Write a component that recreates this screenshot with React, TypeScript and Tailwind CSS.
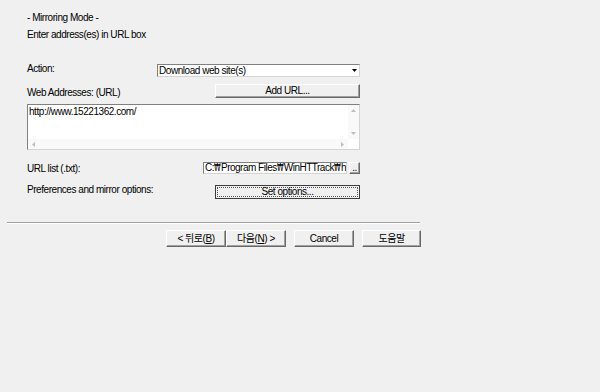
import React from "react";

const F = { fontFamily: '"Liberation Sans", "Noto Sans CJK KR", sans-serif' };

function Btn({ children, className = "" }: { children: React.ReactNode; className?: string }) {
  return (
    <div
      className={
        "flex items-center justify-center border border-t-white border-l-white border-r-[#696969] border-b-[#696969] bg-[#f0f0f0] shadow-[inset_-1px_-1px_0_#a0a0a0] " +
        className
      }
    >
      {children}
    </div>
  );
}

function W() {
  return (
    <span className="inline-block w-[7px] text-[10px] overflow-visible" style={{ fontFamily: '"DejaVu Sans Condensed", "DejaVu Sans", sans-serif' }}>
      <span className="inline-block origin-left scale-x-75">₩</span>
    </span>
  );
}

export default function App() {
  return (
    <div
      className="w-[600px] h-[392px] bg-[#f0f0f0] text-[10px] leading-[12px] tracking-[-0.45px] text-black overflow-hidden"
      style={F}
    >
      <div className="pl-[27px] w-[360px] pt-[12px] flex flex-col">
        <div>- Mirroring Mode -</div>
        <div className="mt-[5px]">Enter address(es) in URL box</div>

        <div className="mt-[23px] flex items-start justify-between">
          <span className="mt-[-1px]">Action:</span>
          <div className="w-[203px] h-[13px] bg-white border border-t-[#808080] border-l-[#808080] border-r-[#d4d4d4] border-b-[#d4d4d4] flex items-center">
            <span className="flex-1 pl-[1px] leading-[11px]">Download web site(s)</span>
            <div className="w-[10px] h-[11px] flex items-center justify-center">
              <svg width="5" height="3" viewBox="0 0 5 3">
                <path d="M0 0H5L2.5 3Z" fill="#000" />
              </svg>
            </div>
          </div>
        </div>

        <div className="mt-[7px] flex items-end justify-between">
          <span className="mb-[-1px]">Web Addresses: (URL)</span>
          <Btn className="w-[145px] h-[14px]">Add URL...</Btn>
        </div>

        <div className="mt-[6px] h-[46px] bg-white border border-t-[#808080] border-l-[#808080] border-r-[#d4d4d4] border-b-[#d4d4d4] flex flex-col">
          <div className="flex-1 flex">
            <div className="flex-1 pl-[1px] pt-[1px] leading-[11px]">http://www.15221362.com/</div>
            <div className="w-[11px] flex flex-col items-center justify-between py-[4px] bg-[#f9f9f9]">
              <svg width="5" height="3" viewBox="0 0 5 3"><path d="M0 3H5L2.5 0Z" fill="#bdbdbd" /></svg>
              <svg width="5" height="3" viewBox="0 0 5 3"><path d="M0 0H5L2.5 3Z" fill="#bdbdbd" /></svg>
            </div>
          </div>
          <div className="h-[10px] flex items-center justify-between px-[4px] bg-[#f9f9f9] mr-[11px]">
            <svg width="3" height="5" viewBox="0 0 3 5"><path d="M3 0V5L0 2.5Z" fill="#bdbdbd" /></svg>
            <svg width="3" height="5" viewBox="0 0 3 5"><path d="M0 0V5L3 2.5Z" fill="#bdbdbd" /></svg>
          </div>
        </div>

        <div className="mt-[11px] flex items-center justify-between">
          <span className="mt-[2px]">URL list (.txt):</span>
          <div className="flex items-center gap-[2px]">
            <div className="w-[144px] h-[12px] bg-white border border-t-[#808080] border-l-[#808080] border-r-[#d4d4d4] border-b-[#d4d4d4] overflow-hidden whitespace-nowrap leading-[10px] pl-[1px] tracking-[-0.5px]">
              C:<W />Program Files<W />WinHTTrack<W />hi
            </div>
            <Btn className="w-[11px] h-[12px] leading-[8px]">..</Btn>
          </div>
        </div>

        <div className="mt-[10px] flex items-start justify-between">
          <span className="mt-[-1px]">Preferences and mirror options:</span>
          <div className="w-[145px] h-[14px] border border-[#3c3c3c] bg-[#f0f0f0] p-[1px]">
            <div className="h-full border border-dotted border-[#555] flex items-center justify-center leading-[10px]">
              Set options...
            </div>
          </div>
        </div>
      </div>

      <div className="ml-[7px] mt-[23px] w-[413px] border-t border-t-[#a0a0a0] border-b border-b-white" />

      <div className="mt-[6px] ml-[166px] flex gap-[8px]">
        <div className="flex">
          <Btn className="w-[60px] h-[17px]">
            &lt; 뒤로(<span className="underline">B</span>)
          </Btn>
          <Btn className="w-[60px] h-[17px]">
            다음(<span className="underline">N</span>) &gt;
          </Btn>
        </div>
        <Btn className="w-[60px] h-[17px]">Cancel</Btn>
        <Btn className="w-[59px] h-[17px]">도움말</Btn>
      </div>
    </div>
  );
}
